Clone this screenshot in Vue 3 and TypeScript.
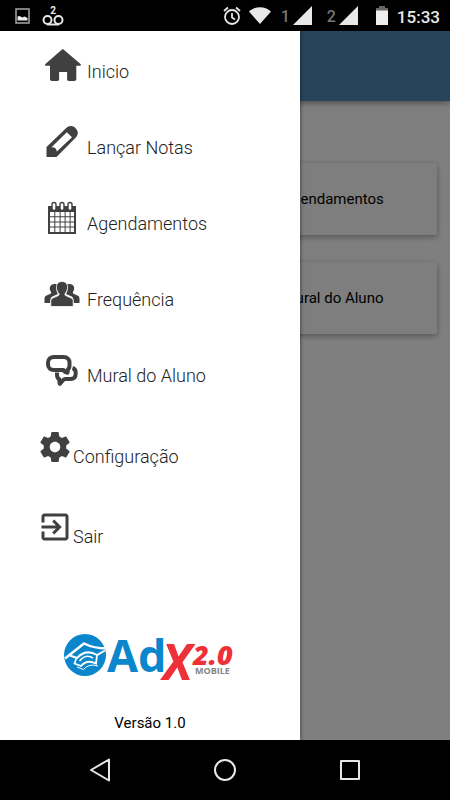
<script setup lang="ts">
import { ref } from 'vue'

type IconName = 'home' | 'pencil' | 'calendar' | 'people' | 'chat'

interface MenuEntry {
  icon: IconName
  label: string
}

const entries: MenuEntry[] = [
  { icon: 'home', label: 'Inicio' },
  { icon: 'pencil', label: 'Lançar Notas' },
  { icon: 'calendar', label: 'Agendamentos' },
  { icon: 'people', label: 'Frequência' },
  { icon: 'chat', label: 'Mural do Aluno' },
]

const tools = [
  {
    label: 'Configuração',
    path: 'M19.43 12.98c.04-.32.07-.64.07-.98s-.03-.66-.07-.98l2.11-1.65c.19-.15.24-.42.12-.64l-2-3.46c-.12-.22-.39-.3-.61-.22l-2.49 1c-.52-.4-1.08-.73-1.69-.98l-.38-2.65C14.46 2.18 14.25 2 14 2h-4c-.25 0-.46.18-.49.42l-.38 2.65c-.61.25-1.17.59-1.69.98l-2.49-1c-.23-.09-.49 0-.61.22l-2 3.46c-.13.22-.07.49.12.64l2.11 1.65c-.04.32-.07.65-.07.98s.03.66.07.98l-2.11 1.65c-.19.15-.24.42-.12.64l2 3.46c.12.22.39.3.61.22l2.49-1c.52.4 1.08.73 1.69.98l.38 2.65c.03.24.24.42.49.42h4c.25 0 .46-.18.49-.42l.38-2.65c.61-.25 1.17-.59 1.69-.98l2.49 1c.23.09.49 0 .61-.22l2-3.46c.12-.22.07-.49-.12-.64l-2.11-1.65zM12 15.5c-1.93 0-3.5-1.57-3.5-3.5s1.57-3.5 3.5-3.5 3.5 1.57 3.5 3.5-1.57 3.5-3.5 3.5z',
  },
  {
    label: 'Sair',
    path: 'M10.09 15.59L11.5 17l5-5-5-5-1.41 1.41L12.67 11H3v2h9.67l-2.58 2.59zM19 3H5c-1.11 0-2 .9-2 2v4h2V5h14v14H5v-4H3v4c0 1.1.89 2 2 2h14c1.1 0 2-.9 2-2V5c0-1.1-.9-2-2-2z',
  },
]

const cards = ['Agendamentos', 'Mural do Aluno']
const clock = ref('15:33')
</script>

<template>
  <div class="screen">
    <header class="status">
      <svg class="picture" width="15" height="16" viewBox="0 0 15 16">
        <rect x="1" y="1" width="13" height="14" fill="none" stroke="#a8a8a8" stroke-width="1.5" />
        <path d="M2.500 12.500V8.500l2-.5 3 1.500 2-1 3 1.500v2.500z" fill="#eee" />
      </svg>
      <div class="voicemail">
        <span>2</span>
        <svg width="22" height="11" viewBox="0 0 22 11" fill="none" stroke="#e6e6e6" stroke-width="2">
          <circle cx="5.500" cy="5" r="4" />
          <circle cx="16.500" cy="5" r="4" />
          <path d="M5 9.500h12" />
        </svg>
      </div>
      <div class="spacer"></div>
      <svg class="alarm" width="18" height="20" viewBox="0 0 18 20" fill="none" stroke="#e8e8e8" stroke-width="1.8">
        <circle cx="9" cy="11" r="7" />
        <path d="M9 7v4.500l3 2M1 5l4-3.500M17 5l-4-3.500" />
      </svg>
      <svg class="wifi" width="22" height="17" viewBox="0 0 22 17">
        <path d="M0 4.500C6-1.200 16-1.200 22 4.500L11 17z" fill="#e8e8e8" />
      </svg>
      <span class="sim">1</span>
      <svg class="signal" width="19" height="19" viewBox="0 0 19 19"><path d="M19 0v19H0z" fill="#e8e8e8" /></svg>
      <span class="sim second">2</span>
      <svg class="signal" width="19" height="19" viewBox="0 0 19 19"><path d="M19 0v19H0z" fill="#e8e8e8" /></svg>
      <svg class="battery" width="12" height="19" viewBox="0 0 12 19">
        <path d="M3 0h6v2h3v3H0V2h3z" fill="#666" />
        <path d="M0 4.500h12V19H0z" fill="#eee" />
      </svg>
      <time>{{ clock }}</time>
    </header>

    <div class="stage">
      <main class="page">
        <div class="toolbar"></div>
        <div class="cards">
          <div v-for="card in cards" :key="card" class="card">{{ card }}</div>
        </div>
      </main>
      <div class="scrim"></div>

      <aside class="drawer">
        <nav>
          <ul class="menu">
            <li v-for="entry in entries" :key="entry.label">
              <a href="#">
                <svg v-if="entry.icon === 'home'" width="38" height="36" viewBox="0 0 38 36">
                  <path d="M18 2.500c.5-.5 1-.5 1.500 0L36.500 17c.8.700.4 1.800-.6 1.800h-3.600V32c0 1.200-.8 2-2 2h-5.500c-1 0-1.700-.7-1.700-1.700V25h-8v7.300c0 1-.7 1.700-1.700 1.700H8c-1.200 0-2-.8-2-2V18.800H2c-1 0-1.400-1.100-.6-1.800z" />
                </svg>
                <svg v-else-if="entry.icon === 'pencil'" width="38" height="36" viewBox="0 0 38 36">
                  <path fill-rule="evenodd" d="M2.500 34V24L22 5.200c3-3 7-2.800 9.800.2 2.700 2.800 2.600 6.300 0 9L12.500 34zM7.500 24.200c3.200-.2 5 1.300 5.300 4.300L28 14.200 22.800 9.300z" />
                </svg>
                <svg v-else-if="entry.icon === 'calendar'" width="38" height="36" viewBox="0 0 38 36">
                  <rect x="4" y="7" width="28" height="28" />
                  <path fill="#fff" d="M6 13h4.300v4.200H6zM11.300 13h4.300v4.200h-4.300zM16.600 13h4v4.200h-4zM21.600 13h4v4.200h-4zM26.600 13H30v4.200h-3.400zM6 18.200h4.300v4.200H6zM11.300 18.200h4.300v4.200h-4.300zM16.600 18.200h4v4.200h-4zM21.600 18.200h4v4.200h-4zM26.600 18.200H30v4.200h-3.400zM6 23.400h4.300v4.200H6zM11.300 23.400h4.300v4.200h-4.300zM16.600 23.400h4v4.200h-4zM21.600 23.400h4v4.200h-4zM26.600 23.400H30v4.200h-3.400zM6 28.600h4.300V33H6zM11.300 28.600h4.300V33h-4.300zM16.600 28.600h4V33h-4zM21.600 28.600h4V33h-4zM26.600 28.600H30V33h-3.400z" />
                  <g fill="#fff" stroke="#404040" stroke-width="1.400">
                    <rect x="8" y="3.500" width="4" height="8" rx="2" />
                    <rect x="16" y="3.500" width="4" height="8" rx="2" />
                    <rect x="24" y="3.500" width="4" height="8" rx="2" />
                  </g>
                </svg>
                <svg v-else-if="entry.icon === 'people'" width="38" height="36" viewBox="0 0 38 36">
                  <path d="M10.500 9c1.500 0 2.500.5 3.200 1.300-1.800 2.800-1.400 6.200.2 8.700l-5.500 2.500c-1.500.8-2 2-2.200 6.500H.5v-4c0-2 .5-3 2-3.500l4-1.800c.8-.4.9-1.300.3-2.200C4.500 13.500 6 9 10.500 9zM25.500 9c-1.500 0-2.500.5-3.200 1.300 1.800 2.800 1.400 6.200-.2 8.700l5.500 2.500c1.500.8 2 2 2.200 6.500h5.700v-4c0-2-.5-3-2-3.500l-4-1.800c-.8-.4-.9-1.300-.3-2.200C31.500 13.500 30 9 25.500 9z" />
                  <path stroke="#fff" stroke-width=".8" d="M18 6.500c4 0 6 3 5.500 6.700-.3 2.300-1.200 4-2.300 5.200-.6.800-.3 1.800.5 2.200l5.500 2.400c1.500.7 2 1.800 2 3.500V31.500H6.800V26.500c0-1.700.5-2.800 2-3.500l5.500-2.400c.8-.4 1.100-1.400.5-2.200-1.100-1.200-2-2.900-2.300-5.200C12 9.500 14 6.500 18 6.500z" />
                </svg>
                <svg v-else width="38" height="36" viewBox="0 0 38 36" class="outline">
                  <path d="M10 6h9.500c4 0 6 2.500 6 5.500v3c0 2-.8 3.500-2 4.200.3 1.500.6 2.200 0 3-1.700 0-3.200-1-4-2.700H10c-3.500 0-6-2.300-6-5.500v-2C4 8.300 6.500 6 10 6z" />
                  <path d="M28.500 17c2.300.8 3.200 2.300 3.200 4.500v1c0 3.500-2 5.500-5.200 5.500H21c-1.500 0-2.500 2-5.200 4.800-.3-1.500-.5-2.800-.5-4.500-1.600-1-2.300-2.500-2.300-4.600V21.500" />
                </svg>
                <span>{{ entry.label }}</span>
              </a>
            </li>
          </ul>
          <ul class="menu tools">
            <li v-for="tool in tools" :key="tool.label">
              <a href="#">
                <svg width="36" height="36" viewBox="0 0 24 24"><path :d="tool.path" /></svg>
                <span>{{ tool.label }}</span>
              </a>
            </li>
          </ul>
        </nav>

        <footer class="about">
          <svg class="logo" width="172" height="84" viewBox="0 -18 172 84">
            <circle cx="21" cy="21" r="21" fill="#0b86cd" />
            <g fill="none" stroke="#fff">
              <path stroke-width="2.400" d="M1 24.500L20 9.500Q30 14.500 43 14.500" />
              <path stroke-width="2" d="M6 21.500L13 24Q22 14.500 33 21L41 16.500" />
              <path stroke-width="1.800" d="M12.500 24L10.500 29.500L17 32Q23 25 32 29.500L33 21" />
              <path stroke-width="1.500" d="M15.500 27Q22 19.500 29 24" />
              <path stroke-width="1" d="M13 33L19.500 35.500Q25 29 34 32" />
            </g>
            <text class="brand-ad" x="43" y="38">Ad</text>
            <text class="brand-x" x="98" y="46">X</text>
            <text class="brand-version" x="129" y="31">2.0</text>
            <text class="brand-mobile" x="131" y="40">MOBILE</text>
          </svg>
          <p>Versão 1.0</p>
        </footer>
      </aside>
    </div>

    <footer class="system">
      <button type="button" aria-label="Voltar">
        <svg width="24" height="24" viewBox="0 0 24 24"><path d="M21 1.500v21L3 12z" /></svg>
      </button>
      <button type="button" aria-label="Início">
        <svg width="24" height="24" viewBox="0 0 24 24"><circle cx="12" cy="12" r="10" /></svg>
      </button>
      <button type="button" aria-label="Recentes">
        <svg width="24" height="24" viewBox="0 0 24 24"><rect x="3" y="3" width="18" height="18" /></svg>
      </button>
    </footer>
  </div>
</template>

<style>
body {
  background: #000;
}
</style>

<style scoped>
.screen {
  display: flex;
  flex-direction: column;
  min-height: 100vh;
  font-family: Roboto, "Liberation Sans", sans-serif;
  font-size: 15px;
  color: #000;
}

svg {
  display: block;
  flex: none;
}

.status {
  display: flex;
  align-items: center;
  height: 31px;
  padding: 0 10px 0 15px;
  background: #000;
  color: #e8e8e8;
}

.voicemail {
  margin-left: 12px;
}

.voicemail span {
  display: block;
  font-size: 10px;
  line-height: 9px;
  font-weight: 700;
  text-align: center;
}

.spacer {
  flex: 1;
}

.wifi {
  margin-left: 8px;
}

.sim {
  width: 12px;
  margin-left: 10px;
  color: #777;
  font-size: 16px;
  font-weight: 500;
  line-height: 20px;
  padding-top: 3px;
}

.second {
  margin-left: 15px;
}

.battery {
  margin: 0 9px 0 18px;
}

time {
  font-size: 17px;
  font-weight: 500;
  line-height: 24px;
  padding-top: 2px;
}

.stage {
  position: relative;
  display: flex;
  flex: 1;
}

.page {
  flex: 1;
  background: #fff;
}

.toolbar {
  height: 70px;
  background: #4e88b4;
  box-shadow: 0 2px 6px rgba(0, 0, 0, 0.4);
}

.cards {
  display: grid;
  grid-template-columns: 1fr 1fr;
  gap: 27px 8px;
  padding: 62px 13px;
}

.card {
  grid-column: 2;
  display: flex;
  align-items: center;
  justify-content: center;
  height: 72px;
  border-radius: 2px;
  background: #fcfcfc;
  box-shadow: 0 2px 6px rgba(0, 0, 0, 0.35);
}

.scrim {
  position: absolute;
  inset: 0;
  background: rgba(0, 0, 0, 0.5);
}

.drawer {
  position: absolute;
  top: 0;
  bottom: 0;
  left: 0;
  display: flex;
  flex-direction: column;
  box-sizing: border-box;
  width: 300px;
  padding: 16px 0 6px;
  background: #fff;
  box-shadow: 0 0 4px rgba(0, 0, 0, 0.6);
}

.menu {
  display: flex;
  flex-direction: column;
  gap: 40px;
  margin: 0;
  padding: 0 0 0 44px;
  list-style: none;
}

.menu a {
  display: flex;
  align-items: flex-end;
  gap: 5px;
  color: #222;
  font-size: 18px;
  font-weight: 300;
  line-height: 22px;
  text-decoration: none;
}

.menu svg {
  fill: #404040;
}

.menu .outline {
  fill: none;
  stroke: #404040;
  stroke-width: 4;
  stroke-linejoin: round;
}

.tools {
  gap: 41px;
  margin-top: 42px;
  padding-left: 37px;
}

.tools a {
  gap: 0;
}

.tools svg {
  margin-bottom: 3px;
}

.about {
  display: flex;
  flex-direction: column;
  align-items: center;
  gap: 12px;
  margin-top: auto;
}

.about p {
  margin: 0;
  line-height: 22px;
}

.logo text {
  font-family: "Open Sans", sans-serif;
  font-weight: 700;
}

.logo .brand-ad {
  fill: #0b86cd;
  font-size: 45px;
}

.logo .brand-x {
  fill: #ee3038;
  font-family: Roboto, sans-serif;
  font-size: 50px;
  font-style: italic;
}

.logo .brand-version {
  fill: #ee3038;
  font-size: 27px;
  font-style: italic;
  font-weight: 800;
}

.logo .brand-mobile {
  fill: #858585;
  font-size: 9px;
}

.system {
  display: grid;
  grid-template-columns: repeat(3, 1fr);
  height: 60px;
  padding: 0 37px;
  background: #000;
}

.system button {
  display: flex;
  align-items: center;
  justify-content: center;
  padding: 0;
  border: 0;
  background: none;
}

.system svg {
  fill: none;
  stroke: #e8e8e8;
  stroke-width: 2;
  stroke-linejoin: round;
}
</style>
